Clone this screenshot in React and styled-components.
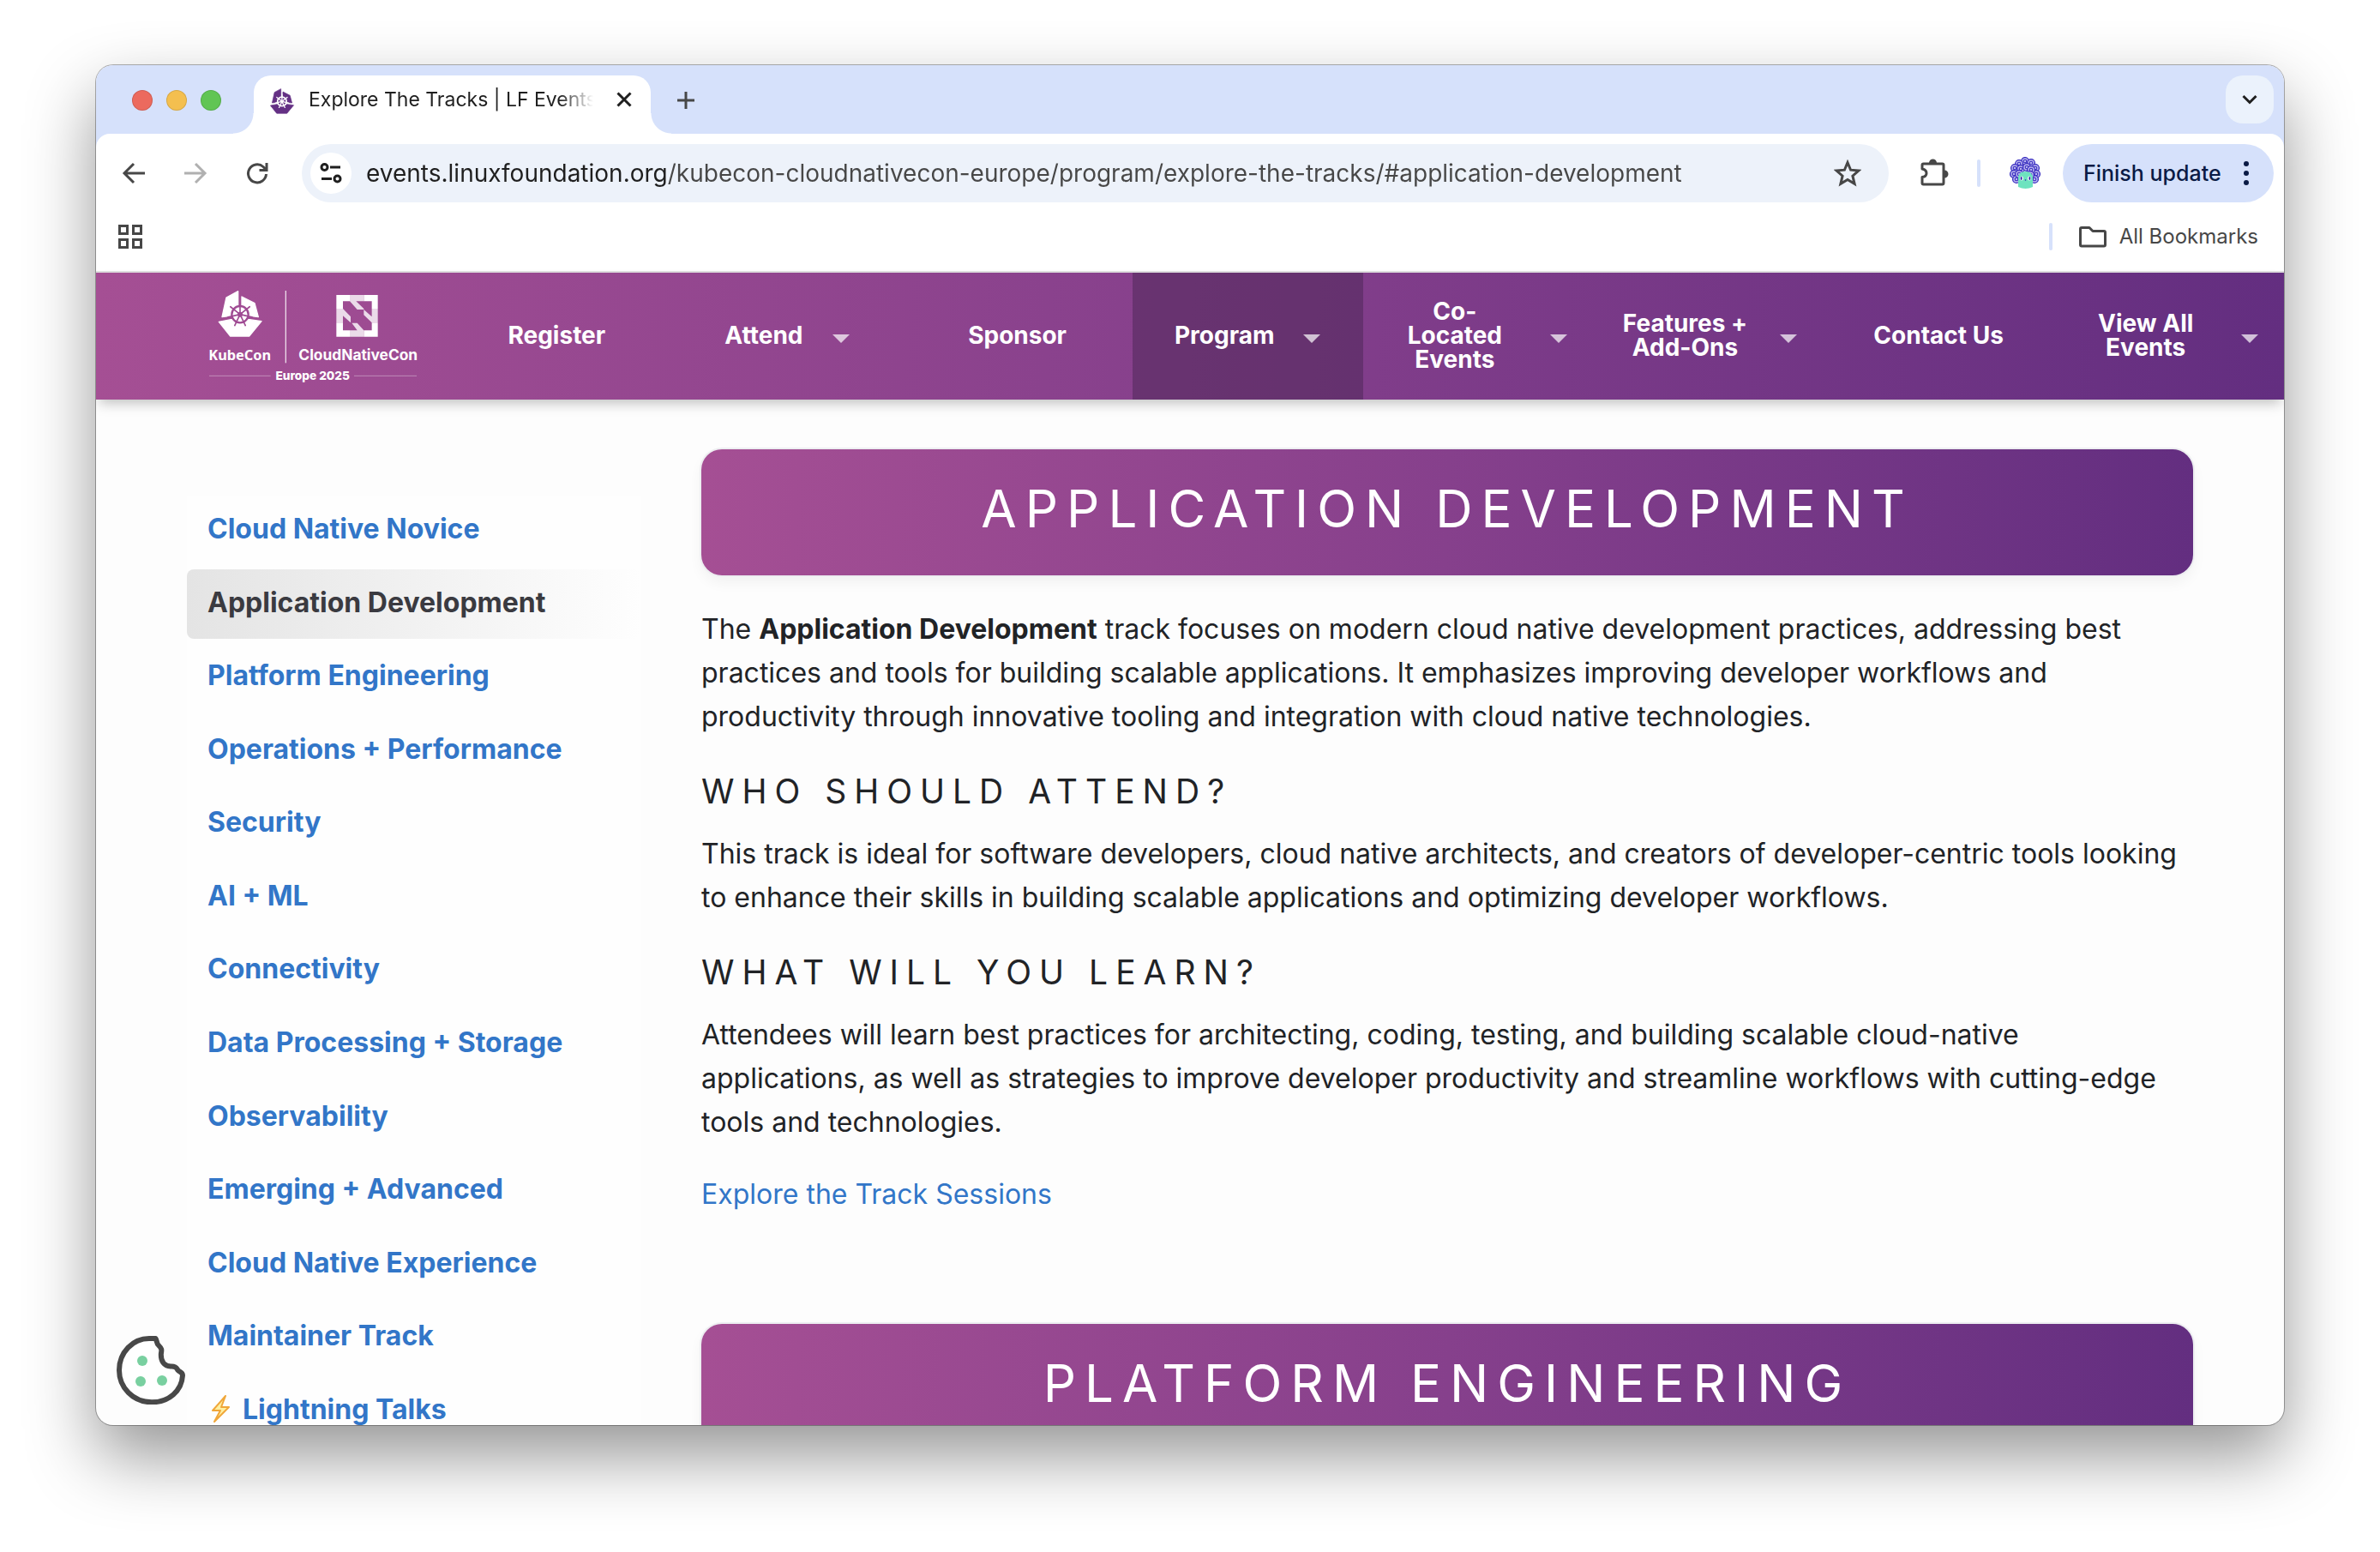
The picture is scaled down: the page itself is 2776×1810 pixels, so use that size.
import React from 'react';
import styled, { createGlobalStyle, css } from 'styled-components';

const sans = '"Inter", "Liberation Sans", sans-serif';
const brandGradient = 'linear-gradient(93deg, #a54f94 0%, #86408c 50%, #632e80 100%)';
const chromeBlue = '#d6e1fb';

const GlobalStyle = createGlobalStyle`
  *, *::before, *::after { box-sizing: border-box; }
  body { margin: 0; background: #fff; font-family: ${sans}; }
  button, input { font-family: inherit; }
  button { border: 0; padding: 0; background: none; color: inherit; cursor: pointer; }
  a { text-decoration: none; }
  svg { display: block; }
`;

const Desktop = styled.div`
  height: 100vh;
  padding: 76px 112px 148px;
  overflow: hidden;
`;

const Window = styled.div`
  position: relative;
  display: flex;
  flex-direction: column;
  height: 100%;
  overflow: hidden;
  border-radius: 20px;
  background: #fdfdfd;
  box-shadow: 0 0 0 1px rgba(0, 0, 0, 0.3), 0 36px 80px rgba(0, 0, 0, 0.42);
`;

/* ---------- browser chrome ---------- */

const TabStrip = styled.div`
  display: flex;
  align-items: flex-end;
  flex: none;
  height: 80px;
  padding-right: 12px;
  background: ${chromeBlue};
`;

const TrafficLights = styled.div`
  display: flex;
  align-items: center;
  gap: 16px;
  width: 184px;
  height: 78px;
  padding-left: 42px;
`;

const Light = styled.button`
  width: 24px;
  height: 24px;
  border-radius: 50%;
  background: ${(p) => p.$color};
  box-shadow: inset 0 0 0 1px rgba(0, 0, 0, 0.12);
`;

const Tab = styled.div`
  position: relative;
  display: flex;
  align-items: center;
  width: 463px;
  height: 68px;
  padding: 0 18px 8px;
  border-radius: 20px 20px 0 0;
  background: #fff;

  &::before, &::after {
    content: '';
    position: absolute;
    bottom: 0;
    width: 24px;
    height: 24px;
  }
  &::before { right: 100%; background: radial-gradient(circle at 0 0, transparent 23px, #fff 24px); }
  &::after { left: 100%; background: radial-gradient(circle at 100% 0, transparent 23px, #fff 24px); }
`;

const TabTitle = styled.span`
  flex: 1;
  min-width: 0;
  margin: 0 19px 4px 16px;
  overflow: hidden;
  white-space: nowrap;
  font-size: 23px;
  line-height: 32px;
  color: #1f1f1f;
  mask-image: linear-gradient(90deg, #000 292px, transparent 332px);
`;

const IconButton = styled.button`
  display: grid;
  place-items: center;
  flex: none;
  width: ${(p) => p.$w || 72}px;
  height: ${(p) => p.$h || 68}px;
  color: ${(p) => p.$color || '#474747'};
`;

const TabClose = styled(IconButton)`
  margin-bottom: 4px;
`;

const TabSearch = styled(IconButton)`
  margin: 0 0 12px auto;
  border-radius: 20px;
  background: #ebf2fc;
`;

const Chrome = styled.div`
  flex: none;
  background: ${chromeBlue};
`;

const Toolbars = styled.div`
  border-radius: 16px 16px 0 0;
  border-bottom: 2px solid #e0e0e0;
  background: #fff;
`;

const Toolbar = styled.div`
  display: flex;
  align-items: center;
  padding: 12px 12px 0 8px;
`;

const Omnibox = styled.div`
  display: flex;
  align-items: center;
  flex: 1;
  height: 68px;
  margin: 0 17px 0 16px;
  padding: 0 12px 0 10px;
  border-radius: 34px;
  background: #edf2fa;
`;

const SiteInfo = styled(IconButton)`
  border-radius: 50%;
  background: #fff;
`;

const Address = styled.input`
  flex: 1;
  min-width: 0;
  height: 48px;
  margin-left: 17px;
  padding: 0;
  border: 0;
  outline: 0;
  background: linear-gradient(90deg, #1f1f1f 352px, #474747 352px);
  background-clip: text;
  -webkit-text-fill-color: transparent;
  font-size: 28px;
`;

const Separator = styled.span`
  flex: none;
  width: 4px;
  height: 32px;
  border-radius: 2px;
  background: ${chromeBlue};
`;

const UpdateButton = styled.button`
  display: flex;
  align-items: center;
  justify-content: space-between;
  width: 246px;
  height: 68px;
  margin-left: 6px;
  padding: 0 28px 0 24px;
  border-radius: 34px;
  background: ${chromeBlue};
  font-size: 25px;
  font-weight: 500;
  color: #0a1a45;
`;

const BookmarksBar = styled.div`
  display: flex;
  align-items: center;
  justify-content: space-between;
  height: 80px;
  padding: 0 30px 0 18px;
`;

const BookmarksRight = styled.div`
  display: flex;
  align-items: center;
  gap: 30px;
`;

const AllBookmarks = styled.button`
  display: flex;
  align-items: center;
  gap: 14px;
  font-size: 24px;
  line-height: 32px;
  color: #474747;
`;

/* ---------- site header ---------- */

const SiteHeader = styled.header`
  position: relative;
  z-index: 1;
  display: flex;
  align-items: center;
  flex: none;
  height: 148px;
  padding-left: 124px;
  background: ${brandGradient};
  box-shadow: 0 8px 14px -4px rgba(0, 0, 0, 0.25);
`;

const LogoLink = styled.a`
  flex: none;
  margin-right: 19px;
`;

const SiteNav = styled.nav`
  display: flex;
  flex: 1;
  height: 100%;
`;

const NavItem = styled.a`
  display: flex;
  align-items: center;
  justify-content: center;
  flex: 1 1 0;
  min-width: 0;
  padding-bottom: 3px;
  font-size: 28px;
  font-weight: 700;
  line-height: 28px;
  text-align: center;
  color: #fff;
  ${(p) => p.$active && css`background: rgba(74, 38, 84, 0.5);`}
`;

const NavLabel = styled.span`
  ${(p) => p.$wrap && css`width: 154px;`}
`;

const Caret = styled.span`
  flex: none;
  margin: 8px 0 0 34px;
  border: 10px solid transparent;
  border-top-color: rgba(255, 255, 255, 0.7);
  border-bottom: 0;
`;

/* ---------- page ---------- */

const Page = styled.div`
  display: flex;
  flex: 1;
  gap: 70px;
  min-height: 0;
  padding: 58px 106px 0;
  overflow: hidden;
`;

const Sidebar = styled.aside`
  flex: none;
  width: 530px;
  padding-top: 54px;
`;

const TrackList = styled.ul`
  display: flex;
  flex-direction: column;
  justify-content: space-between;
  height: 1108px;
  margin: 0;
  padding: 0;
  list-style: none;
  background: #fefefe;
`;

const TrackLink = styled.a`
  display: flex;
  align-items: center;
  gap: 10px;
  padding: 13px 24px 17px;
  border-radius: 8px;
  font-size: 32px;
  font-weight: 700;
  line-height: 51px;
  color: #3276c8;
  ${(p) => p.$active && css`
    background: linear-gradient(90deg, #e4e4e4, rgba(254, 254, 254, 0));
    color: #3a3a40;
  `}
`;

const Main = styled.main`
  flex: 1;
  min-width: 0;
`;

const Banner = styled.h2`
  margin: 0 0 37px;
  padding: 29px 0 38px;
  border-radius: 24px;
  background: ${brandGradient};
  box-shadow: 0 0 0 2px #edeef1, 0 8px 16px rgba(0, 0, 0, 0.05);
  font-size: 60px;
  font-weight: 400;
  line-height: 80px;
  letter-spacing: 10px;
  text-align: center;
  text-transform: uppercase;
  color: #fff;
`;

const SubHeading = styled.h3`
  margin: 36px 0 22px;
  font-size: 39px;
  font-weight: 400;
  line-height: 51px;
  letter-spacing: 9px;
  text-transform: uppercase;
  color: #212326;
`;

const Paragraph = styled.p`
  margin: 0;
  padding-right: 10px;
  font-size: 32px;
  line-height: 51px;
  color: #212326;
`;

const SessionsLink = styled.a`
  display: inline-block;
  margin: 33px 0 126px;
  font-size: 32px;
  line-height: 51px;
  color: #3276c8;
`;

const CookieButton = styled.button`
  position: absolute;
  left: 24px;
  bottom: 24px;
  z-index: 2;
`;

/* ---------- drawings ---------- */

const Stroke = ({ size = 32, w = 3, vb = 32, left = 0, children }) => (
  <svg width={size} height={size} viewBox={`${left} 0 ${vb} ${vb}`} fill="none" stroke="currentColor" strokeWidth={w} aria-hidden="true">
    {children}
  </svg>
);

const spokes = [0, 1, 2, 3, 4, 5, 6].map((i) => {
  const a = (i * 2 * Math.PI) / 7 - Math.PI / 2;
  return [Math.cos(a), Math.sin(a)];
});

const Helm = ({ panel, wheel, ring = 5 }) => (
  <g>
    <g fill={panel} stroke={panel} strokeWidth="4" strokeLinejoin="round">
      <path d="M125 29 L84 51 L69 119 L125 111 Z" />
      <path d="M138 48 L183 71 L196 119 L138 111 Z" />
      <path d="M58 136 L100 128 L165 128 L207 134 L164 186 L98 186 Z" />
    </g>
    <circle cx="132" cy="110" r="30" fill={panel} />
    <g stroke={wheel} fill="none">
      <circle cx="132" cy="110" r="29" strokeWidth={ring + 2} />
      {spokes.map(([x, y]) => (
        <path key={x} strokeWidth={ring} strokeLinecap="round" d={`M132 110 L${132 + x * 43} ${110 + y * 43}`} />
      ))}
      <circle cx="132" cy="110" r="9" fill={wheel} stroke="none" />
    </g>
  </g>
);

const Favicon = () => (
  <svg width="30" height="32" viewBox="50 24 165 168" aria-hidden="true">
    <Helm panel="#643084" wheel="#fff" ring={7} />
  </svg>
);

const KubeConLogo = () => (
  <svg width="260" height="120" viewBox="0 6 780 360" role="img" aria-label="KubeCon CloudNativeCon Europe 2025">
    <Helm panel="#fff" wheel="#9f4b93" />
    <rect x="290" y="27" width="4" height="253" fill="#fff" opacity="0.8" />
    <g transform="translate(-48 -60)" fill="#fff">
      <path d="M517 102H564V124H540V150H517Z M613 102H662V150H641V124H613Z M517 199H540V226H564V248H517Z M641 199H662V248H613V226H641Z" />
      <g opacity="0.8">
        <path d="M564 102H613V124H586L613 150V153H590L564 124Z" />
        <path d="M517 150H540L567 178V199L540 175V199H517Z" />
        <path d="M613 153L641 178V150H662V199H641L613 172Z" />
        <path d="M571 200H590L613 226V248H564V226H590Z" />
      </g>
    </g>
    <g fill="#fff" fontWeight="700">
      <text x="22" y="270" fontSize="49" fontFamily='"Noto Sans", sans-serif'>KubeCon</text>
      <text x="337" y="270" fontSize="52" fontFamily={sans}>CloudNativeCon</text>
      <text x="386" y="338" fontSize="41" fontWeight="800" textAnchor="middle" fontFamily={sans}>Europe 2025</text>
    </g>
    <path d="M24 325H239 M531 325H750" stroke="#fff" strokeWidth="3" opacity="0.35" />
  </svg>
);

const curls = [
  [18, 5], [11, 8], [25, 7], [6, 13], [30, 13], [5, 20], [31, 20], [8, 26], [29, 26], [13, 14], [20, 12], [25, 15], [11, 20], [24, 21],
];

const Avatar = () => (
  <svg width="36" height="38" viewBox="0 0 36 38" aria-hidden="true">
    {curls.map(([x, y]) => (
      <g key={`${x}-${y}`} fill="none" stroke="#3a2fc0">
        <circle cx={x} cy={y} r="4.4" fill="#b9b4ee" strokeWidth="1.3" />
        <circle cx={x} cy={y} r="1.8" strokeWidth="1.1" />
      </g>
    ))}
    <path d="M10 35 V25 Q10 17 18.500 17 Q27 17 27 25 V35 Q18.500 39 10 35Z" fill="#6ee3bf" />
    <ellipse cx="14" cy="25" rx="2" ry="2.600" fill="#fff" />
    <ellipse cx="23" cy="25" rx="2" ry="2.600" fill="#fff" />
    <ellipse cx="13.600" cy="25" rx="1" ry="2" fill="#2a22a8" />
    <ellipse cx="23.400" cy="25" rx="1" ry="2" fill="#2a22a8" />
    <circle cx="18.500" cy="27" r="0.800" fill="#2a22a8" />
  </svg>
);

const Cookie = () => (
  <svg width="80" height="80" viewBox="0 0 80 80" aria-hidden="true">
    <path
      d="M45.500 3 C47 5 46.500 9 49 11 C54 16 52 17 51.800 22 C51.800 29 55 35 63 35.500 C70 35 70 38 71.500 40 C73 42 77 42 77 46 C76 64 61 77.300 41 77.300 C19 77.300 3 60 3 40 C3 19 19 3 38 3 Z"
      fill="#fff" stroke="#484848" strokeWidth="6" strokeLinejoin="round"
    />
    <g fill="#79d0a0">
      <circle cx="30" cy="29" r="6" />
      <circle cx="28" cy="53" r="6" />
      <circle cx="53" cy="52" r="6" />
    </g>
  </svg>
);

const Bolt = () => (
  <svg width="31" height="36" viewBox="0 0 31 36" aria-hidden="true">
    <path d="M21 3 L6 20 L15 20 L8 33 L25 16 L16 16 Z" fill="#fff0a0" stroke="#f0a73a" strokeWidth="2" strokeLinejoin="round" />
  </svg>
);

/* ---------- data ---------- */

const navItems = [
  { label: 'Register' },
  { label: 'Attend', menu: true },
  { label: 'Sponsor' },
  { label: 'Program', menu: true, active: true },
  { label: <>Co-<br />Located<br />Events</>, key: 'colo', menu: true, wrap: true },
  { label: 'Features + Add-Ons', menu: true, wrap: true },
  { label: 'Contact Us' },
  { label: 'View All Events', menu: true, wrap: true },
];

const tracks = [
  'Cloud Native Novice', 'Application Development', 'Platform Engineering', 'Operations + Performance', 'Security',
  'AI + ML', 'Connectivity', 'Data Processing + Storage', 'Observability', 'Emerging + Advanced',
  'Cloud Native Experience', 'Maintainer Track', 'Lightning Talks',
];

const slug = (s) => `#${s.toLowerCase().replace(/[^a-z]+/g, '-')}`;

function BrowserChrome() {
  return (
    <>
      <TabStrip>
        <TrafficLights>
          <Light $color="#ec6a5e" aria-label="Close window" />
          <Light $color="#f4bf4f" aria-label="Minimize window" />
          <Light $color="#61c554" aria-label="Zoom window" />
        </TrafficLights>
        <Tab>
          <Favicon />
          <TabTitle>Explore The Tracks | LF Events</TabTitle>
          <TabClose $w={26} $h={32} $color="#1f1f1f" aria-label="Close tab">
            <Stroke size={26} vb={26} w={3}><path d="M5.500 5.500 L20.500 20.500 M20.500 5.500 L5.500 20.500" /></Stroke>
          </TabClose>
        </Tab>
        <IconButton $w={82} $h={78} aria-label="New tab">
          <Stroke size={24} vb={24} w={3}><path d="M12 2V22M2 12H22" /></Stroke>
        </IconButton>
        <TabSearch $w={56} $h={56} $color="#1f1f1f" aria-label="Search tabs">
          <Stroke size={20} vb={20} w={3}><path d="M2.500 6 L10 13.500 L17.500 6" /></Stroke>
        </TabSearch>
      </TabStrip>
      <Chrome>
        <Toolbars>
          <Toolbar>
            <IconButton aria-label="Back">
              <Stroke><path d="M29 16H5 M16 5L5 16L16 27" /></Stroke>
            </IconButton>
            <IconButton $color="#b0b0b0" aria-label="Forward">
              <Stroke><path d="M3 16H27 M16 5L27 16L16 27" /></Stroke>
            </IconButton>
            <IconButton aria-label="Reload">
              <Stroke><path d="M26.500 17 A10.500 10.500 0 1 1 23 8.500 L26.500 12 M27 4V12.500H18.500" /></Stroke>
            </IconButton>
            <Omnibox>
              <SiteInfo $w={48} $h={48} $color="#1f1f1f" aria-label="View site information">
                <Stroke>
                  <circle cx="8.500" cy="9" r="3.500" /><path d="M15 9H27" />
                  <circle cx="23.500" cy="22.500" r="3.500" /><path d="M5 22.500H17" />
                </Stroke>
              </SiteInfo>
              <Address
                aria-label="Address"
                defaultValue="events.linuxfoundation.org/kubecon-cloudnativecon-europe/program/explore-the-tracks/#application-development"
              />
              <IconButton aria-label="Bookmark this tab">
                <Stroke w={3}>
                  <path d="M16 3.500 L19.600 12.200 L29 13 L21.900 19.200 L24.100 28.300 L16 23.400 L7.900 28.300 L10.100 19.200 L3 13 L12.400 12.200 Z" />
                </Stroke>
              </IconButton>
            </Omnibox>
            <IconButton aria-label="Extensions">
              <Stroke size={36} vb={36} left={1} w={3}>
                <path d="M5 29.500 V22.500 Q10 22 10 18 Q10 14 5 13 V8.500 Q5 7 6.500 7 H28.500 Q30 7 30 8.500 V29 Q30 31 28.500 31 H6.500 Q5 31 5 29.500Z" strokeLinejoin="round" />
                <path d="M13 6 A4.500 4.500 0 0 1 22 6Z M31 14.500 A4.500 4.500 0 0 1 31 23.500Z" fill="currentColor" strokeWidth="0" />
              </Stroke>
            </IconButton>
            <IconButton as="span" $w={32}><Separator /></IconButton>
            <IconButton $w={76} aria-label="Profile"><Avatar /></IconButton>
            <UpdateButton>
              Finish update
              <svg width="8" height="30" viewBox="0 0 8 30" fill="currentColor" aria-hidden="true">
                <circle cx="4" cy="4" r="3" /><circle cx="4" cy="15" r="3" /><circle cx="4" cy="26" r="3" />
              </svg>
            </UpdateButton>
          </Toolbar>
          <BookmarksBar>
            <IconButton $w={44} $h={44} aria-label="Apps">
              <Stroke size={28} vb={28} w={3}>
                <path d="M1.500 1.500H10.500V10.500H1.500Z M17.500 1.500H26.500V10.500H17.500Z M1.500 17.500H10.500V26.500H1.500Z M17.500 17.500H26.500V26.500H17.500Z" />
              </Stroke>
            </IconButton>
            <BookmarksRight>
              <Separator />
              <AllBookmarks>
                <Stroke size={34} vb={34} w={3}>
                  <path d="M2.500 26.500V8Q2.500 6.500 4 6.500H13L17 10.500H30Q31.500 10.500 31.500 12V26.500Q31.500 28 30 28H4Q2.500 28 2.500 26.500Z" strokeLinejoin="round" />
                </Stroke>
                All Bookmarks
              </AllBookmarks>
            </BookmarksRight>
          </BookmarksBar>
        </Toolbars>
      </Chrome>
    </>
  );
}

export default function App() {
  return (
    <Desktop>
      <GlobalStyle />
      <Window>
        <BrowserChrome />
        <SiteHeader>
          <LogoLink href="#home"><KubeConLogo /></LogoLink>
          <SiteNav aria-label="Event">
            {navItems.map((item) => (
              <NavItem key={item.key || item.label} href="#nav" $active={item.active}>
                <NavLabel $wrap={item.wrap}>{item.label}</NavLabel>
                {item.menu && <Caret />}
              </NavItem>
            ))}
          </SiteNav>
        </SiteHeader>
        <Page>
          <Sidebar>
            <TrackList>
              {tracks.map((track) => (
                <li key={track}>
                  <TrackLink href={slug(track)} $active={track === 'Application Development'}>
                    {track === 'Lightning Talks' && <Bolt />}
                    {track}
                  </TrackLink>
                </li>
              ))}
            </TrackList>
          </Sidebar>
          <Main>
            <Banner>Application Development</Banner>
            <Paragraph>
              The <strong>Application Development</strong> track focuses on modern cloud native development practices,
              addressing best practices and tools for building scalable applications. It emphasizes improving developer
              workflows and productivity through innovative tooling and integration with cloud native technologies.
            </Paragraph>
            <SubHeading>Who should attend?</SubHeading>
            <Paragraph>
              This track is ideal for software developers, cloud native architects, and creators of developer-centric
              tools looking to enhance their skills in building scalable applications and optimizing developer workflows.
            </Paragraph>
            <SubHeading>What will you learn?</SubHeading>
            <Paragraph>
              Attendees will learn best practices for architecting, coding, testing, and building scalable cloud-native
              applications, as well as strategies to improve developer productivity and streamline workflows with
              cutting-edge tools and technologies.
            </Paragraph>
            <SessionsLink href="#sessions">Explore the Track Sessions</SessionsLink>
            <Banner>Platform Engineering</Banner>
          </Main>
        </Page>
        <CookieButton aria-label="Cookie settings"><Cookie /></CookieButton>
      </Window>
    </Desktop>
  );
}
